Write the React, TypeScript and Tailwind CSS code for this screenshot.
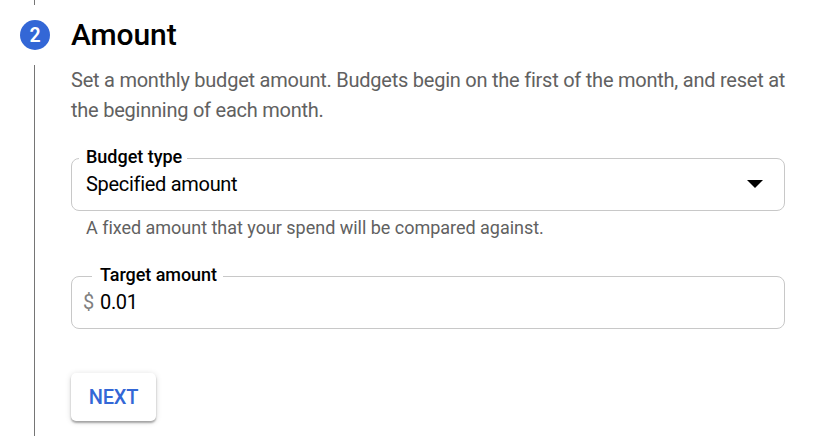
export default function App() {
  return (
    <main className="flex h-[436px] w-full overflow-hidden bg-white pl-5 font-['Roboto',sans-serif] text-black">
      <div className="flex w-[30px] shrink-0 flex-col items-start">
        <div className="ml-[14px] h-[5px] w-px bg-[#757575]" />
        <div className="mt-[15px] flex size-[30px] items-center justify-center rounded-full bg-[#3367d6] pt-px text-[19.5px] leading-[29px] font-semibold text-white">2</div>
        <div className="mt-[15px] ml-[14px] w-px flex-1 bg-[#757575]" />
      </div>
      <section className="ml-[21px] w-[714px] shrink-0">
        <h1 className="mt-[15px] h-[40px] text-[30px] leading-[40px] font-medium tracking-[-0.1px]">Amount</h1>
        <p className="mt-[10px] text-[20px] leading-[30px] tracking-[-0.238px] whitespace-nowrap text-[#616161]">
          Set a monthly budget amount. Budgets begin on the first of the month, and reset at<br />
          the beginning of each month.
        </p>
        <fieldset className="mt-[22px] h-[64px] rounded-lg border border-[#c8c8c8] px-[7px]">
          <legend className="h-[22px] pr-[5px] pl-[7px] text-[18px] leading-[20px] font-medium tracking-[-0.02px]">Budget type</legend>
          <div className="flex items-center justify-between px-[7px] text-[20px] leading-[30px] tracking-[-0.3px]">
            <span>Specified amount</span>
            <svg width="16" height="8" viewBox="0 0 16 8" className="mr-[7px]"><path d="M0 0h16L8 8z" /></svg>
          </div>
        </fieldset>
        <p className="mt-[3px] ml-[15px] text-[18px] leading-[28px] tracking-[-0.022px] text-[#616161]">A fixed amount that your spend will be compared against.</p>
        <fieldset className="mt-[23px] h-[64px] rounded-lg border border-[#c8c8c8] px-[11px]">
          <legend className="ml-[9px] h-[22px] pr-[6px] pl-[8px] text-[18px] leading-[20px] font-medium tracking-[-0.05px]">Target amount</legend>
          <div className="flex gap-[6px] text-[20px] leading-[30px] tracking-[-0.3px]"><span className="text-[#808080]">$</span><span>0.01</span></div>
        </fieldset>
        <button className="mt-[44px] h-[48px] w-[85px] rounded-[5px] bg-white text-[20px] font-medium tracking-[-0.25px] text-[#3367d6] shadow-[0_2px_2px_rgba(0,0,0,0.3),0_1px_6px_rgba(0,0,0,0.14)]">NEXT</button>
      </section>
    </main>
  );
}
